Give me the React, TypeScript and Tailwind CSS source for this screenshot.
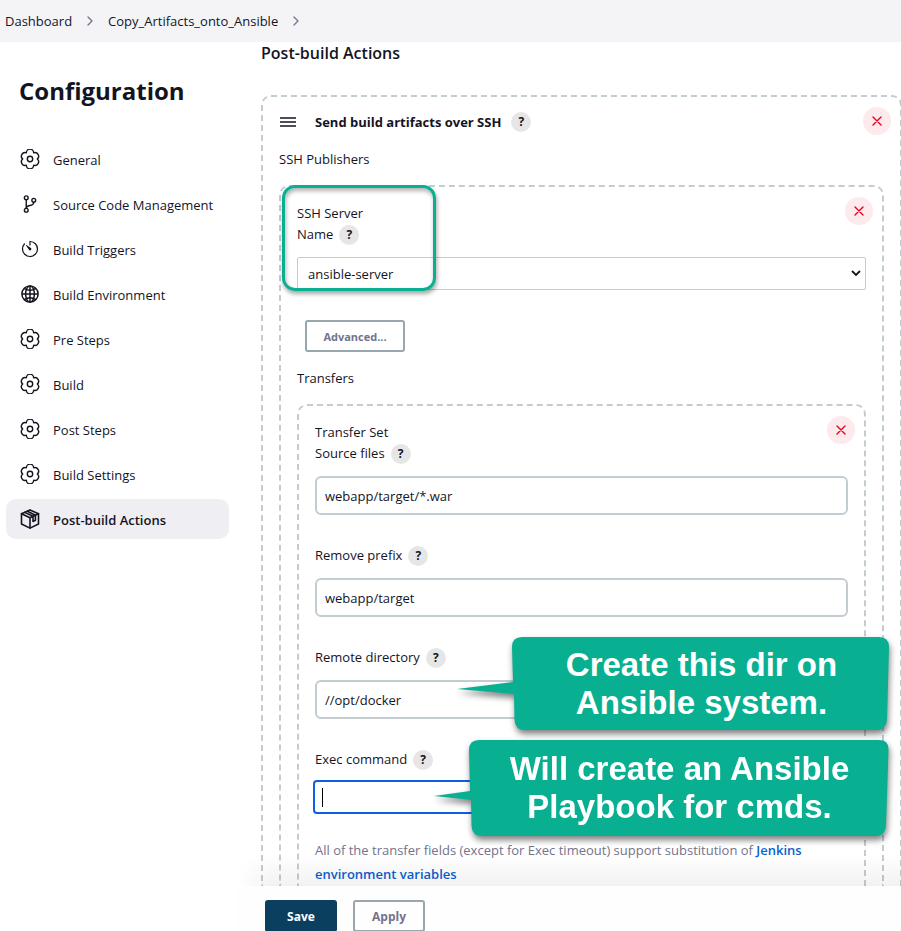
import type { ReactNode } from 'react';
import { IoGitBranchOutline, IoTimerOutline, IoGlobeOutline } from 'react-icons/io5';

function GearIcon() {
  return (
    <svg viewBox="0 0 20 20" className="size-5" fill="none" stroke="currentColor" strokeWidth="1.4" strokeLinejoin="round" aria-hidden="true">
      <path d="M17.300 10A3.650 3.650 0 0 1 13.650 16.200A3.650 3.650 0 0 1 6.350 16.200A3.650 3.650 0 0 1 2.700 10A3.650 3.650 0 0 1 6.350 3.800A3.650 3.650 0 0 1 13.650 3.800A3.650 3.650 0 0 1 17.300 10Z" />
      <circle cx="10" cy="10" r="2.7" />
    </svg>
  );
}

function PackageIcon() {
  return (
    <svg viewBox="0 0 20 20" className="size-5" fill="none" stroke="currentColor" strokeWidth="1.6" strokeLinejoin="round" strokeLinecap="round" aria-hidden="true">
      <path d="M10 .9 18.500 4.700v10.300L10 19.100 1.500 15V4.700Z" />
      <path d="M1.500 4.700 10 8.700l8.500-4M10 8.700v10.400M4.700 3.400 13 7.300v5.200l2.400-1.200V6.200L7.400 2.200" />
    </svg>
  );
}

const navItems: { label: string; icon: ReactNode; active?: boolean }[] = [
  { label: 'General', icon: <GearIcon /> },
  { label: 'Source Code Management', icon: <IoGitBranchOutline className="size-5 [&_*]:stroke-[36px]" /> },
  { label: 'Build Triggers', icon: <IoTimerOutline className="size-5" /> },
  { label: 'Build Environment', icon: <IoGlobeOutline className="size-5 [&_*]:stroke-[38px]" /> },
  { label: 'Pre Steps', icon: <GearIcon /> },
  { label: 'Build', icon: <GearIcon /> },
  { label: 'Post Steps', icon: <GearIcon /> },
  { label: 'Build Settings', icon: <GearIcon /> },
  { label: 'Post-build Actions', icon: <PackageIcon />, active: true },
];

function Chevron() {
  return (
    <svg viewBox="0 0 8 10" className="h-2.5 w-2" fill="none" stroke="#73738c" strokeWidth="1.3" strokeLinecap="round" strokeLinejoin="round" aria-hidden="true">
      <path d="M2 1l4 4-4 4" />
    </svg>
  );
}

function Help({ topic }: { topic: string }) {
  return (
    <button type="button" aria-label={`Help for ${topic}`} className="flex size-5 items-center justify-center rounded-full bg-[#e6e6e6] text-xs font-bold">
      ?
    </button>
  );
}

function Remove({ label }: { label: string }) {
  return (
    <button type="button" aria-label={label} className="absolute top-2.5 right-[9px] flex size-7 items-center justify-center rounded-full bg-[#fdeaec] text-[#e6001f]">
      <svg viewBox="0 0 10 10" className="size-2.5" stroke="currentColor" strokeWidth="1.4" strokeLinecap="round" aria-hidden="true">
        <path d="M1 1l8 8M9 1l-8 8" />
      </svg>
    </button>
  );
}

function DashedBox({ children }: { children: ReactNode }) {
  return (
    <div className="relative flex flex-1 flex-col rounded-t-[10px] border-2 border-b-0 border-dashed border-[#c3ccd1] px-4 pt-4">
      {children}
    </div>
  );
}

function FieldLabel({ id, text }: { id: string; text: string }) {
  return (
    <div className="mb-3 flex h-[21px] items-center gap-1.5">
      <label htmlFor={id}>{text}</label>
      <Help topic={text} />
    </div>
  );
}

function TextField({ id, label, value, children }: { id: string; label: string; value: string; children?: ReactNode }) {
  return (
    <div className="relative mb-[30px]">
      <FieldLabel id={id} text={label} />
      <input id={id} type="text" defaultValue={value} className="block h-[39px] w-full rounded-md border-2 border-[#c3ccd1] bg-white px-2 outline-none" />
      {children}
    </div>
  );
}

export default function App() {
  return (
    <div className="flex h-screen flex-col overflow-hidden bg-white font-['Open_Sans','Noto_Sans',sans-serif] text-[13px] leading-[21px] text-[#14141f]">
      <nav aria-label="Breadcrumb" className="flex h-[42px] shrink-0 items-center bg-[#f4f4f7] pl-[5px]">
        <a href="#dashboard">Dashboard</a>
        <span className="px-3.5"><Chevron /></span>
        <a href="#job">Copy_Artifacts_onto_Ansible</a>
        <span className="px-3.5"><Chevron /></span>
      </nav>

      <div className="flex min-h-0 flex-1">
        <aside className="w-[261px] shrink-0 pr-8 pl-1.5">
          <h1 className="mt-8 mb-[31px] ml-[13px] text-2xl leading-[34px] font-bold">Configuration</h1>
          <nav aria-label="Configuration sections" className="flex flex-col gap-[5px]">
            {navItems.map((item) => (
              <a
                key={item.label}
                href="#section"
                className={`flex h-10 items-center gap-[13px] rounded-[10px] pl-3.5 ${item.active ? 'bg-[#eeeef3] font-semibold' : ''}`}
              >
                {item.icon}
                <span className="pt-0.5">{item.label}</span>
              </a>
            ))}
          </nav>
        </aside>

        <main className="-mr-px flex min-w-0 flex-1 flex-col">
          <h2 className="mb-[30px] text-base leading-[23px] font-semibold">Post-build Actions</h2>
          <DashedBox>
            <Remove label="Remove build step" />
            <div className="mb-[18px] flex h-[18px] items-center">
              <svg viewBox="0 0 16 10" className="mr-[19px] ml-px h-2.5 w-4" stroke="currentColor" strokeWidth="1.6" aria-hidden="true">
                <path d="M0 1h16M0 5h16M0 9h16" />
              </svg>
              <strong className="mr-2.5">Send build artifacts over SSH</strong>
              <Help topic="Send build artifacts over SSH" />
            </div>
            <div className="mb-[15px]">SSH Publishers</div>

            <DashedBox>
              <Remove label="Remove server" />
              <label htmlFor="server" className="w-20">SSH Server</label>
              <FieldLabel id="server" text="Name" />
              <div className="relative">
                <select id="server" className="block h-[33px] w-full appearance-none rounded-xs border border-[#c3ccd1] bg-white px-2.5 pt-0.5">
                  <option>ansible-server</option>
                </select>
                <svg viewBox="0 0 10 7" className="pointer-events-none absolute top-[13px] right-[5px] h-[7px] w-2.5" fill="none" stroke="currentColor" strokeWidth="1.8" aria-hidden="true">
                  <path d="M1 1l4 4 4-4" />
                </svg>
              </div>
              <div aria-hidden="true" className="pointer-events-none absolute -top-0.5 left-px h-[106px] w-[154px] rounded-[13px] border-3 border-[#08af91] shadow-[1px_3px_4px_rgba(0,0,0,0.35),inset_1px_3px_4px_rgba(0,0,0,0.3)]" />
              <button type="button" className="mt-[30px] mb-4 ml-2 h-8 w-[100px] rounded-[3px] border-2 border-[#98a6ad] pt-0.5 text-[11px] leading-4 font-bold text-[#73738c]">
                Advanced...
              </button>
              <div className="mb-[15px]">Transfers</div>

              <DashedBox>
                <Remove label="Remove transfer set" />
                <div>Transfer Set</div>
                <TextField id="source" label="Source files" value="webapp/target/*.war" />
                <TextField id="prefix" label="Remove prefix" value="webapp/target" />
                <TextField id="remote" label="Remote directory" value="//opt/docker">
                  <div className="absolute -top-2.5 left-[142px] z-10 h-[94px] w-[433px]">
                    <svg viewBox="0 0 433 94" className="absolute inset-0 size-full overflow-visible drop-shadow-[1px_4px_3px_rgba(0,0,0,0.5)]" fill="#08af91" aria-hidden="true">
                      <path d="M65 0H422Q432 0 432 10L430 83Q429 93 419 93H68Q58 93 57.500 83L57 57 0 52 56 45 55 10Q55 0 65 0Z" />
                    </svg>
                    <p className="relative ml-14 pt-[9px] text-center font-['Liberation_Sans',Arial,sans-serif] text-[33px] leading-[38px] font-bold text-white">
                      Create this dir on<br />Ansible system.
                    </p>
                  </div>
                </TextField>
                <div className="relative mb-[26px]">
                  <FieldLabel id="exec" text="Exec command" />
                  <textarea id="exec" autoFocus className="block h-[30px] w-full resize-none overflow-hidden rounded-xs bg-white px-1.5 py-1 outline-2 outline-[#0b5fe0]" />
                  <span aria-hidden="true" className="absolute top-[39px] left-[7px] h-[19px] w-px bg-black" />
                  <div className="absolute -top-[9px] left-[119px] z-10 h-24 w-[455px]">
                    <svg viewBox="0 0 455 96" className="absolute inset-0 size-full overflow-visible drop-shadow-[1px_4px_3px_rgba(0,0,0,0.5)]" fill="#08af91" aria-hidden="true">
                      <path d="M45 0H445Q455 0 454.500 10L452 86Q451 96 441 96H48Q38 96 37.500 86L37 60 0 56 36 51 35 10Q35 0 45 0Z" />
                    </svg>
                    <p className="relative ml-9 pt-2.5 text-center font-['Liberation_Sans',Arial,sans-serif] text-[33px] leading-[38px] font-bold text-white">
                      Will create an Ansible<br />Playbook for cmds.
                    </p>
                  </div>
                </div>
                <p className="max-w-[500px] leading-6 text-[#73738c]">
                  All of the transfer fields (except for Exec timeout) support substitution of{' '}
                  <a href="#variables" className="font-semibold text-[#0b5fd0]">Jenkins environment variables</a>
                </p>
              </DashedBox>
            </DashedBox>
          </DashedBox>
        </main>
      </div>

      <footer className="relative ml-[237px] flex h-[45px] shrink-0 gap-4 bg-[#fefefe] pt-3.5 pl-7">
        <div aria-hidden="true" className="pointer-events-none absolute right-0 bottom-full left-0 h-8 bg-linear-to-t from-black/5 to-transparent mask-l-from-95%" />
        <button type="button" className="h-8 w-[72px] shrink-0 rounded-[3px] bg-[#0b3f60] pt-0.5 text-xs font-bold text-white">Save</button>
        <button type="button" className="h-8 w-[72px] shrink-0 rounded-[3px] border-2 border-[#98a6ad] pt-0.5 text-xs font-bold text-[#73738c]">Apply</button>
      </footer>
    </div>
  );
}
